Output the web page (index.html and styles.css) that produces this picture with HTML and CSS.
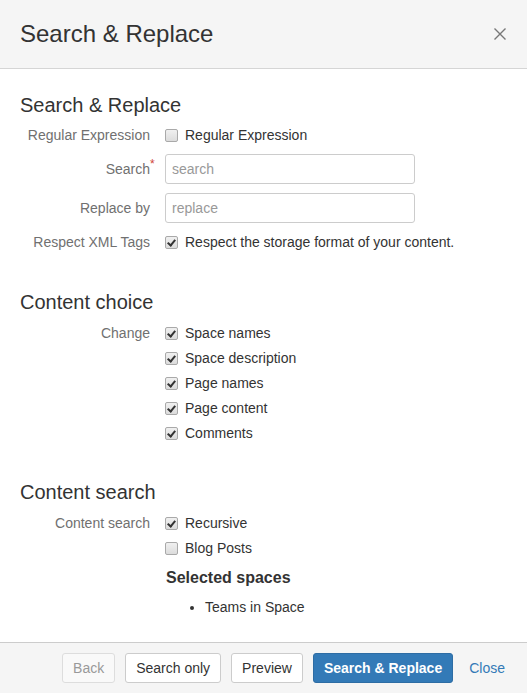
FILE: index.html
```html
<!DOCTYPE html>
<html>
<head>
<meta charset="utf-8">
<link rel="stylesheet" href="styles.css">
</head>
<body>
<div class="dialog">
  <header class="dlg-header">
    <h1 class="dlg-title">Search &amp; Replace</h1>
    <button class="dlg-close" aria-label="Close">
      <svg width="12" height="12" viewBox="0 0 12 12"><path d="M0.5 0.5 L11.5 11.5 M11.5 0.5 L0.5 11.5" stroke="#777" stroke-width="1.4" fill="none"/></svg>
    </button>
  </header>
  <main class="dlg-body">
    <h2 class="section-title">Search &amp; Replace</h2>
    <div class="form-grid first">
      <div class="lbl">Regular Expression</div>
      <div class="ctrl"><label class="check"><span class="box"></span>Regular Expression</label></div>
    </div>
    <div class="form-grid input-row">
      <div class="lbl"><span class="req-wrap">Search<span class="req">*</span></span></div>
      <div class="ctrl"><input class="text" type="text" placeholder="search"></div>
    </div>
    <div class="form-grid input-row">
      <div class="lbl">Replace by</div>
      <div class="ctrl"><input class="text" type="text" placeholder="replace"></div>
    </div>
    <div class="form-grid input-row">
      <div class="lbl">Respect XML Tags</div>
      <div class="ctrl"><label class="check"><span class="box on"></span>Respect the storage format of your content.</label></div>
    </div>

    <h2 class="section-title next">Content choice</h2>
    <div class="form-grid first">
      <div class="lbl">Change</div>
      <div class="ctrl stack">
        <label class="check"><span class="box on"></span>Space names</label>
        <label class="check"><span class="box on"></span>Space description</label>
        <label class="check"><span class="box on"></span>Page names</label>
        <label class="check"><span class="box on"></span>Page content</label>
        <label class="check"><span class="box on"></span>Comments</label>
      </div>
    </div>

    <h2 class="section-title next last">Content search</h2>
    <div class="form-grid first">
      <div class="lbl">Content search</div>
      <div class="ctrl stack">
        <label class="check"><span class="box on"></span>Recursive</label>
        <label class="check"><span class="box"></span>Blog Posts</label>
        <h3 class="sub-title">Selected spaces</h3>
        <ul class="spaces"><li>Teams in Space</li></ul>
      </div>
    </div>
  </main>
  <footer class="dlg-footer">
    <button class="btn disabled">Back</button>
    <button class="btn">Search only</button>
    <button class="btn">Preview</button>
    <button class="btn primary">Search &amp; Replace</button>
    <a class="link" href="#">Close</a>
  </footer>
</div>
</body>
</html>
```
FILE: styles.css
```css
* { box-sizing: border-box; }
html, body { margin: 0; padding: 0; }
body {
  font-family: "Liberation Sans", Arial, sans-serif;
  font-size: 14px;
  line-height: 20px;
  color: #333;
  background: #fff;
}
.dialog {
  width: 527px;
  height: 693px;
  display: flex;
  flex-direction: column;
  background: #fff;
}
.dlg-header {
  height: 69px;
  flex: none;
  background: #f5f5f5;
  border-bottom: 1px solid #d5d5d5;
  display: flex;
  align-items: center;
  justify-content: space-between;
  padding: 0 21px 1px 20px;
}
.dlg-title {
  margin: 0;
  font-size: 24px;
  font-weight: normal;
  line-height: 28px;
  color: #333;
}
.dlg-close {
  border: 0;
  background: none;
  padding: 0;
  width: 12px;
  height: 12px;
  display: flex;
}
.dlg-body {
  flex: 1;
  padding: 25px 20px 0 20px;
}
.section-title {
  margin: 0;
  font-size: 20px;
  font-weight: normal;
  line-height: 22px;
  color: #333;
}
.section-title.next { margin-top: 39px; }
.section-title.next.last { margin-top: 38px; }
.form-grid {
  display: grid;
  grid-template-columns: 130px 1fr;
  column-gap: 15px;
  margin-top: 9px;
}
.form-grid.first { margin-top: 9px; }
.section-title.next + .form-grid.first { margin-top: 10px; }
.input-row { margin-top: 9px; }
.lbl {
  text-align: right;
  color: #707070;
  white-space: nowrap;
}
.input-row .lbl { display: flex; align-items: center; justify-content: flex-end; }
.req-wrap { position: relative; }
.req {
  position: absolute;
  left: 100%;
  top: -5px;
  color: #d04437;
  font-size: 12px;
}
.ctrl { display: flex; align-items: center; }
.ctrl.stack { flex-direction: column; align-items: flex-start; gap: 5px; }
.check {
  display: flex;
  align-items: center;
  gap: 7px;
  height: 20px;
  white-space: nowrap;
}
.box {
  width: 13px;
  height: 13px;
  border: 1px solid #a9a9a9;
  border-radius: 2px;
  background: linear-gradient(#f0f0f0, #dcdcdc);
  position: relative;
  flex: none;
}
.box.on::after {
  content: "";
  position: absolute;
  left: 3px;
  top: 1px;
  width: 3px;
  height: 6px;
  border: solid #333;
  border-width: 0 2px 2px 0;
  transform: rotate(40deg);
}
.text {
  width: 250px;
  height: 30px;
  border: 1px solid #ccc;
  border-radius: 3px;
  padding: 0 6px;
  font-family: inherit;
  font-size: 14px;
  color: #333;
  background: #fff;
}
.text::placeholder { color: #999; }
.sub-title {
  margin: 5px 0 0 1px;
  font-size: 16px;
  font-weight: bold;
  line-height: 20px;
  color: #333;
}
.spaces {
  margin: 4px 0 0 0;
  padding-left: 40px;
  font-size: 14px;
}
.dlg-footer {
  height: 51px;
  flex: none;
  background: #f5f5f5;
  border-top: 1px solid #ccc;
  display: flex;
  align-items: center;
  justify-content: flex-end;
  gap: 10px;
  padding: 0 21px 0 0;
}
.btn {
  height: 30px;
  padding: 0 10px;
  border: 1px solid #ccc;
  border-radius: 3px;
  background: #fff;
  font-family: inherit;
  font-size: 14px;
  color: #333;
}
.btn.disabled { color: #999; border-color: #ddd; background: #f9f9f9; }
.btn.primary {
  background: #337ab7;
  border-color: #2e6da4;
  color: #fff;
  font-weight: bold;
  padding: 0 10px;
}
.link {
  color: #337ab7;
  text-decoration: none;
  padding: 0 1px 0 6px;
}
```
